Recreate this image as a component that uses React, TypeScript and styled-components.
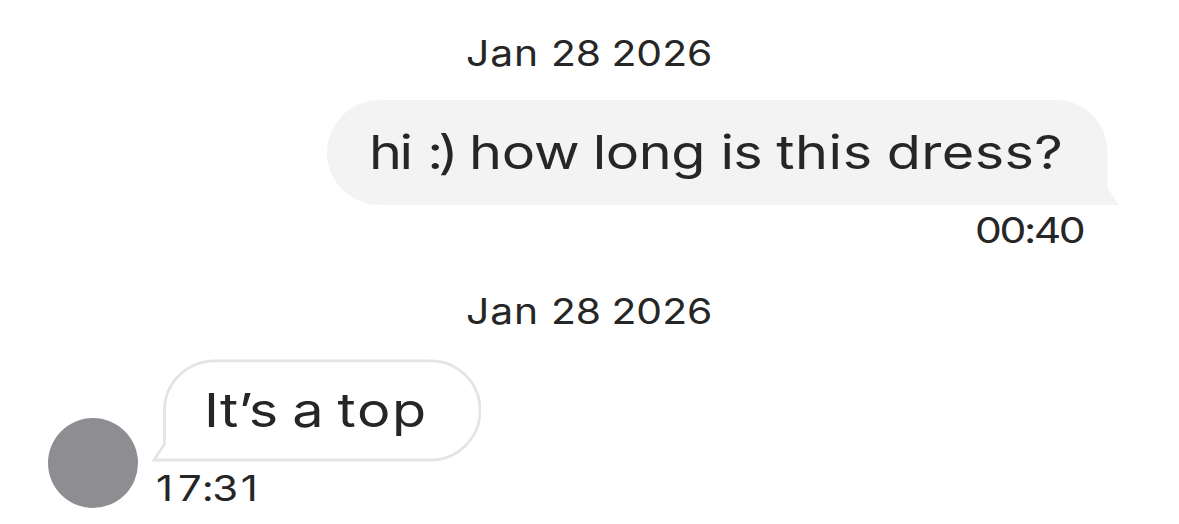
import * as React from 'react';
import styled, { createGlobalStyle } from 'styled-components';

interface TextProps {
    $size: number;
    $stretch: number;
    $word?: number;
    $origin?: string;
}

interface WordData {
    text: string;
    tracking: number;
    gap?: number;
}

interface Props {
    words: WordData[];
    time: WordData[];
}

const question: WordData[] = [
    { text: 'hi', tracking: -2 },
    { text: ':)', tracking: -4.3, gap: 1.5 },
    { text: 'how', tracking: -0.2, gap: 0.8 },
    { text: 'long', tracking: -0.4, gap: -1.2 },
    { text: 'is', tracking: -0.6, gap: 0.5 },
    { text: 'this', tracking: 0.5, gap: -0.4 },
    { text: 'dress?', tracking: 0.3, gap: -0.6 },
];

const questionTime: WordData[] = [{ text: '00:40', tracking: -2 }];

const answer: WordData[] = [
    { text: 'It’s', tracking: 0.1 },
    { text: 'a', tracking: 0, gap: -0.4 },
    { text: 'top', tracking: 1.4, gap: -0.5 },
];

const answerTime: WordData[] = [
    { text: '1', tracking: 4.2 },
    { text: '7', tracking: 0 },
    { text: ':', tracking: -1.2 },
    { text: '3', tracking: 2.2 },
    { text: '1', tracking: 0 },
];

const dateWords: WordData[] = [
    { text: 'Jan', tracking: 0.8 },
    { text: '28', tracking: 0, gap: 1.4 },
    { text: '2026', tracking: 0 },
];

const Words: React.FC<{ words: WordData[]; joined?: boolean }> = ({ words, joined }) => (
    <>
        {words.map((word, index) => (
            <React.Fragment key={index}>
                {index > 0 && !joined && ' '}
                <Word $tracking={word.tracking} $gap={word.gap}>
                    {word.text}
                </Word>
            </React.Fragment>
        ))}
    </>
);

const SentMessage: React.FC<Props> = ({ words, time }) => (
    <SentGroup>
        <SentBubble>
            <BubbleShape width="792" height="105" viewBox="0 0 792 105">
                <path
                    d="M52.5 0H728.5C758 0 780.5 23 780.5 52.5V88L792 105H52.5A52.5 52.5 0 0 1 52.5 0Z"
                    fill="#f3f3f3"
                />
            </BubbleShape>
            <Text $size={46.5} $stretch={1.2} $word={-0.8}>
                <Words words={words} />
            </Text>
        </SentBubble>
        <SentTime>
            <Text $size={35.5} $stretch={1.2} $origin="right">
                <Words words={time} joined />
            </Text>
        </SentTime>
    </SentGroup>
);

const ReceivedMessage: React.FC<Props> = ({ words, time }) => (
    <ReceivedRow>
        <Avatar />
        <ReceivedGroup>
            <ReceivedBubble>
                <BubbleShape width="330" height="104" viewBox="0 0 330 104">
                    <path
                        d="M64 2.8H279.5A49.6 49.6 0 0 1 279.5 102H3L13.5 86V52.5C13.5 25 36 2.8 64 2.8Z"
                        fill="#ffffff"
                        stroke="#e4e4e4"
                        strokeWidth="2.8"
                    />
                </BubbleShape>
                <Text $size={46.5} $stretch={1.2} $word={-1}>
                    <Words words={words} />
                </Text>
            </ReceivedBubble>
            <ReceivedTime>
                <Text $size={35.5} $stretch={1.18}>
                    <Words words={time} joined />
                </Text>
            </ReceivedTime>
        </ReceivedGroup>
    </ReceivedRow>
);

const DateLabel: React.FC = () => (
    <DateRow>
        <Text $size={35.5} $stretch={1.15} $word={-1} $origin="center">
            <Words words={dateWords} />
        </Text>
    </DateRow>
);

export default function App() {
    return (
        <>
            <GlobalStyle />
            <Thread>
                <DateLabel />
                <SentMessage words={question} time={questionTime} />
                <DateLabel />
                <ReceivedMessage words={answer} time={answerTime} />
            </Thread>
        </>
    );
}

const GlobalStyle = createGlobalStyle`
    body {
        margin: 0;
        background: #ffffff;
        color: #262626;
        font-family: Inter, 'Liberation Sans', sans-serif;
    }
`;

const Thread = styled.main`
    box-sizing: border-box;
    display: flex;
    flex-direction: column;
    width: 1179px;
    height: 524px;
    padding-top: 30px;
    overflow: hidden;
`;

// Widens the face horizontally without changing its height
const Text = styled.span<TextProps>`
    position: relative;
    display: inline-block;
    white-space: pre;
    font-size: ${({ $size }) => $size}px;
    word-spacing: ${({ $word = 0 }) => $word}px;
    transform: scaleX(${({ $stretch }) => $stretch});
    transform-origin: ${({ $origin = 'left' }) => $origin} center;
`;

const Word = styled.span<{ $tracking: number; $gap?: number }>`
    margin-left: ${({ $gap = 0 }) => $gap}px;
    letter-spacing: ${({ $tracking }) => $tracking}px;
`;

const DateRow = styled.div`
    display: flex;
    justify-content: center;
    height: 48px;
    line-height: 48px;
`;

const SentGroup = styled.section`
    display: flex;
    flex-direction: column;
    align-items: flex-end;
    height: 188px;
    margin: 22px 60px 0 0;
`;

const SentBubble = styled.div`
    position: relative;
    box-sizing: border-box;
    width: 792px;
    height: 105px;
    padding-left: 42px;
    line-height: 105px;
`;

const BubbleShape = styled.svg`
    position: absolute;
    top: 0;
    left: 0;
`;

const SentTime = styled.div`
    height: 52px;
    padding-right: 36px;
    line-height: 52px;
`;

const ReceivedRow = styled.section`
    display: flex;
    align-items: flex-start;
    margin: 22px 0 0 48px;
`;

const Avatar = styled.div`
    width: 90px;
    height: 90px;
    margin-top: 60px;
    border-radius: 50%;
    background: #8e8d92;
`;

const ReceivedGroup = styled.div`
    display: flex;
    flex-direction: column;
    margin-left: 13px;
`;

const ReceivedBubble = styled.div`
    position: relative;
    box-sizing: border-box;
    width: 330px;
    height: 104px;
    padding-left: 53px;
    line-height: 104px;
`;

const ReceivedTime = styled.div`
    height: 54px;
    padding-left: 5px;
    line-height: 54px;
`;
